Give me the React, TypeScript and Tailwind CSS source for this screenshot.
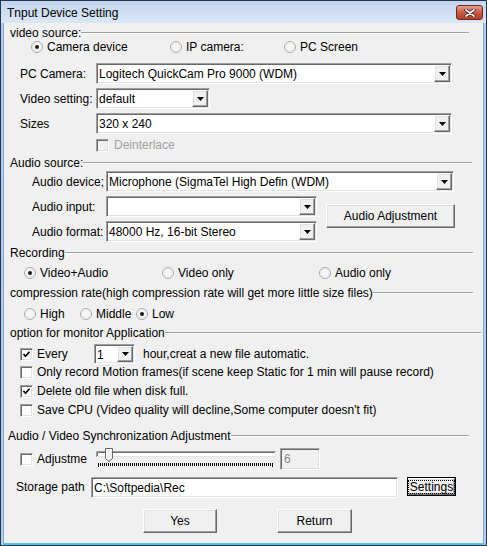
import React from "react";

const sunken =
  "border border-t-[#a0a0a0] border-l-[#a0a0a0] border-r-white border-b-white shadow-[inset_1px_1px_0_#696969,inset_-1px_-1px_0_#e3e3e3]";
const raised =
  "border border-t-white border-l-white border-r-[#696969] border-b-[#696969] shadow-[inset_-1px_-1px_0_#a0a0a0,inset_1px_1px_0_#e3e3e3] bg-[#f0f0f0]";

const Group = ({ label, width }: { label: string; width: string }) => (
  <div className={`flex h-[14px] items-center ${width}`}>
    <span className="whitespace-nowrap leading-[14px]">{label}</span>
    <div className="h-[2px] flex-1 border-y border-t-[#a0a0a0] border-b-white" />
  </div>
);

const Radio = ({ checked, label, width }: { checked?: boolean; label: string; width?: string }) => (
  <span className={`flex items-center gap-[4px] ${width ?? ""}`}>
    <svg width="12" height="12" viewBox="0 0 12 12" className="shrink-0">
      <circle cx="6" cy="6" r="5.5" fill="#fff" stroke="#a8a8a8" />
      <circle cx="6" cy="6" r="4.3" fill="#f6f6f6" stroke="#dedede" strokeWidth="0.8" />
      {checked && <circle cx="6" cy="6" r="2" fill="#1a1a1a" />}
    </svg>
    <span className="whitespace-nowrap leading-[14px]">{label}</span>
  </span>
);

const Check = ({ checked, disabled }: { checked?: boolean; disabled?: boolean }) => (
  <span
    className={`flex h-[13px] w-[13px] shrink-0 items-center justify-center ${sunken} ${
      disabled ? "bg-[#f0f0f0]" : "bg-white"
    }`}
  >
    {checked && (
      <svg width="9" height="9" viewBox="0 0 9 9">
        <polyline points="1.5,4 3.5,6.3 7.5,1.8" fill="none" stroke="#000" strokeWidth="1.7" />
      </svg>
    )}
  </span>
);

const CheckRow = ({ checked, label, disabled }: { checked?: boolean; label: string; disabled?: boolean }) => (
  <span className="flex items-center gap-[4px]">
    <Check checked={checked} disabled={disabled} />
    <span className={`whitespace-nowrap leading-[14px] ${disabled ? "text-[#a0a0a0]" : ""}`}>{label}</span>
  </span>
);

const DropBtn = () => (
  <span className={`flex h-full w-[16px] shrink-0 items-center justify-center ${raised}`}>
    <svg width="7" height="4" viewBox="0 0 7 4">
      <polygon points="0,0 7,0 3.5,4" fill="#000" />
    </svg>
  </span>
);

const Combo = ({ value, width, height = "h-[21px]" }: { value: string; width: string; height?: string }) => (
  <div className={`flex ${width} ${height} shrink-0 bg-white p-[1px] ${sunken}`}>
    <span className="flex flex-1 items-center overflow-hidden whitespace-nowrap pl-[1px] pt-[1px] leading-[14px]">
      {value}
    </span>
    <DropBtn />
  </div>
);

const Button = ({ label, className }: { label: string; className: string }) => (
  <div className={`flex shrink-0 items-center justify-center ${raised} ${className}`}>{label}</div>
);

const Slider = () => {
  const ticks = [];
  for (let i = 0; i < 88; i++) {
    const x = 2.5 + i * 2;
    const big = i === 0 || i === 87;
    ticks.push(<line key={i} x1={x} x2={x} y1={17} y2={big ? 21 : 20} stroke="#000" strokeWidth="1" />);
  }
  return (
    <svg width="180" height="22" viewBox="0 0 180 22" className="shrink-0 self-start">
      <rect x="0.5" y="5.5" width="179" height="5" fill="#fff" stroke="#e3e3e3" />
      <path d="M0.5 11V5.5H179.5" fill="none" stroke="#a0a0a0" />
      <path d="M1.5 10V6.5H178.5" fill="none" stroke="#696969" />
      <path d="M9.5 2.5H16.5V12.5L13 15.5L9.5 12.5Z" fill="#f0f0f0" stroke="#696969" />
      <path d="M10.5 12V3.5H15.5" fill="none" stroke="#fff" />
      {ticks}
    </svg>
  );
};

export default function App() {
  return (
    <div className="flex h-[546px] w-[487px] flex-col border border-[#24364d] bg-[#b3cdea] font-['Liberation_Sans',Arial,sans-serif] text-[12px] text-black">
      <div className="flex h-[22px] shrink-0 items-start bg-gradient-to-b from-[#c2d5ee] to-[#dbe7f5]">
        <span className="mt-[5px] pl-[6px] leading-[14px]">Tnput Device Setting</span>
        <div className="ml-auto mr-[3px] mt-[4px] flex h-[15px] w-[27px] items-center justify-center rounded-[3px] border border-[#6e2a24] bg-gradient-to-b from-[#e3a08f] via-[#cc5a47] to-[#b43c2a]">
          <svg width="12" height="8" viewBox="0 0 12 8">
            <path d="M2 1L10 7M10 1L2 7" stroke="#4c1a16" strokeWidth="3.4" strokeLinecap="round" />
            <path d="M2 1L10 7M10 1L2 7" stroke="#fff" strokeWidth="1.8" strokeLinecap="round" />
          </svg>
        </div>
      </div>

      <div className="mx-[2px] flex flex-1 flex-col bg-[#f0f0f0] border-l border-r border-[#7fa9d6]">
        <div className="mt-[3px] pl-[6px]">
          <Group label="video source:" width="w-[459px]" />
        </div>
        <div className="flex h-[14px] items-center pl-[27px]">
          <Radio checked label="Camera device" width="w-[139px]" />
          <Radio label="IP camera:" width="w-[114px]" />
          <Radio label="PC Screen" />
        </div>

        <div className="mt-[9px] flex items-center pl-[16px]">
          <span className="w-[76px] leading-[14px]">PC Camera:</span>
          <Combo value="Logitech QuickCam Pro 9000 (WDM)" width="w-[356px]" />
        </div>
        <div className="mt-[4px] flex items-center pl-[16px]">
          <span className="w-[76px] whitespace-nowrap leading-[14px]">Video setting:</span>
          <Combo value="default" width="w-[114px]" />
        </div>
        <div className="mt-[4px] flex items-center pl-[16px]">
          <span className="w-[76px] leading-[14px]">Sizes</span>
          <Combo value="320 x 240" width="w-[356px]" />
        </div>
        <div className="mt-[4px] flex h-[14px] items-center pl-[92px]">
          <span className="flex items-center gap-[5px]">
            <Check disabled />
            <span className="leading-[14px] text-[#a0a0a0]">Deinterlace</span>
          </span>
        </div>

        <div className="mt-[4px] pl-[6px]">
          <Group label="Audio source:" width="w-[462px]" />
        </div>
        <div className="mt-[1px] flex items-center pl-[28px]">
          <span className="w-[74px] whitespace-nowrap leading-[14px]">Audio device;</span>
          <Combo value="Microphone (SigmaTel High Defin (WDM)" width="w-[348px]" />
        </div>
        <div className="mt-[4px] flex pl-[28px]">
          <div className="flex flex-col gap-[4px]">
            <div className="flex items-center">
              <span className="w-[74px] leading-[14px]">Audio input:</span>
              <Combo value="" width="w-[211px]" />
            </div>
            <div className="flex items-center">
              <span className="w-[74px] whitespace-nowrap leading-[14px]">Audio format:</span>
              <Combo value="48000 Hz, 16-bit Stereo" width="w-[211px]" />
            </div>
          </div>
          <Button label="Audio Adjustment" className="ml-[9px] mt-[8px] h-[24px] w-[129px]" />
        </div>

        <div className="mt-[4px] pl-[6px]">
          <Group label="Recording" width="w-[463px]" />
        </div>
        <div className="mt-[6px] flex h-[14px] items-center pl-[20px]">
          <Radio checked label="Video+Audio" width="w-[138px]" />
          <Radio label="Video only" width="w-[157px]" />
          <Radio label="Audio only" />
        </div>

        <div className="mt-[6px] pl-[6px]">
          <Group label="compression rate(high compression rate will get more little size files)" width="w-[463px]" />
        </div>
        <div className="mt-[7px] flex h-[14px] items-center pl-[20px]">
          <Radio label="High" width="w-[56px]" />
          <Radio label="Middle" width="w-[56px]" />
          <Radio checked label="Low" />
        </div>

        <div className="mt-[5px] pl-[6px]">
          <Group label="option for monitor Application" width="w-[471px]" />
        </div>
        <div className="mt-[4px] flex h-[20px] items-center pl-[16px]">
          <span className="w-[74px]">
            <CheckRow checked label="Every" />
          </span>
          <Combo value="1" width="w-[41px]" height="h-[20px]" />
          <span className="ml-[8px] whitespace-nowrap leading-[14px]">hour,creat a new file automatic.</span>
        </div>
        <div className="mt-[1px] flex h-[14px] items-center pl-[16px]">
          <CheckRow label="Only record Motion frames(if scene keep Static for 1 min will pause record)" />
        </div>
        <div className="mt-[5px] flex h-[14px] items-center pl-[16px]">
          <CheckRow checked label="Delete old file when disk full." />
        </div>
        <div className="mt-[5px] flex h-[14px] items-center pl-[16px]">
          <CheckRow label="Save CPU (Video quality will decline,Some computer doesn't fit)" />
        </div>

        <div className="mt-[12px] pl-[4px]">
          <Group label="Audio / Video Synchronization Adjustment" width="w-[461px]" />
        </div>
        <div className="mt-[3px] flex h-[26px] items-center pl-[16px]">
          <div className="w-[70px]">
            <CheckRow label="Adjustme" />
          </div>
          <div className="ml-[6px] flex h-full">
            <Slider />
          </div>
          <div className={`ml-[4px] flex h-[22px] w-[40px] items-center bg-[#f0f0f0] pl-[3px] text-[#8a8a8a] ${sunken}`}>
            6
          </div>
        </div>

        <div className="mt-[5px] flex items-start pl-[12px]">
          <span className="mt-[3px] w-[75px] whitespace-nowrap leading-[14px]">Storage path</span>
          <div className={`flex h-[21px] w-[307px] items-center bg-white pl-[2px] pt-[1px] ${sunken}`}>
            {"C:\\Softpedia\\Rec"}
          </div>
          <div className="ml-[9px] h-[19px] w-[49px] border border-black">
            <div className={`flex h-full w-full items-center justify-center ${raised}`}>
              <span className="px-[1px] leading-[12px] outline outline-1 outline-dotted outline-black">Settings</span>
            </div>
          </div>
        </div>

        <div className="mt-[11px] flex pl-[139px]">
          <Button label="Yes" className="h-[24px] w-[74px]" />
          <Button label="Return" className="ml-[60px] h-[24px] w-[75px]" />
        </div>
      </div>
      <div className="mx-[2px] h-[2px] shrink-0 bg-[#52c2e8]" />
    </div>
  );
}
